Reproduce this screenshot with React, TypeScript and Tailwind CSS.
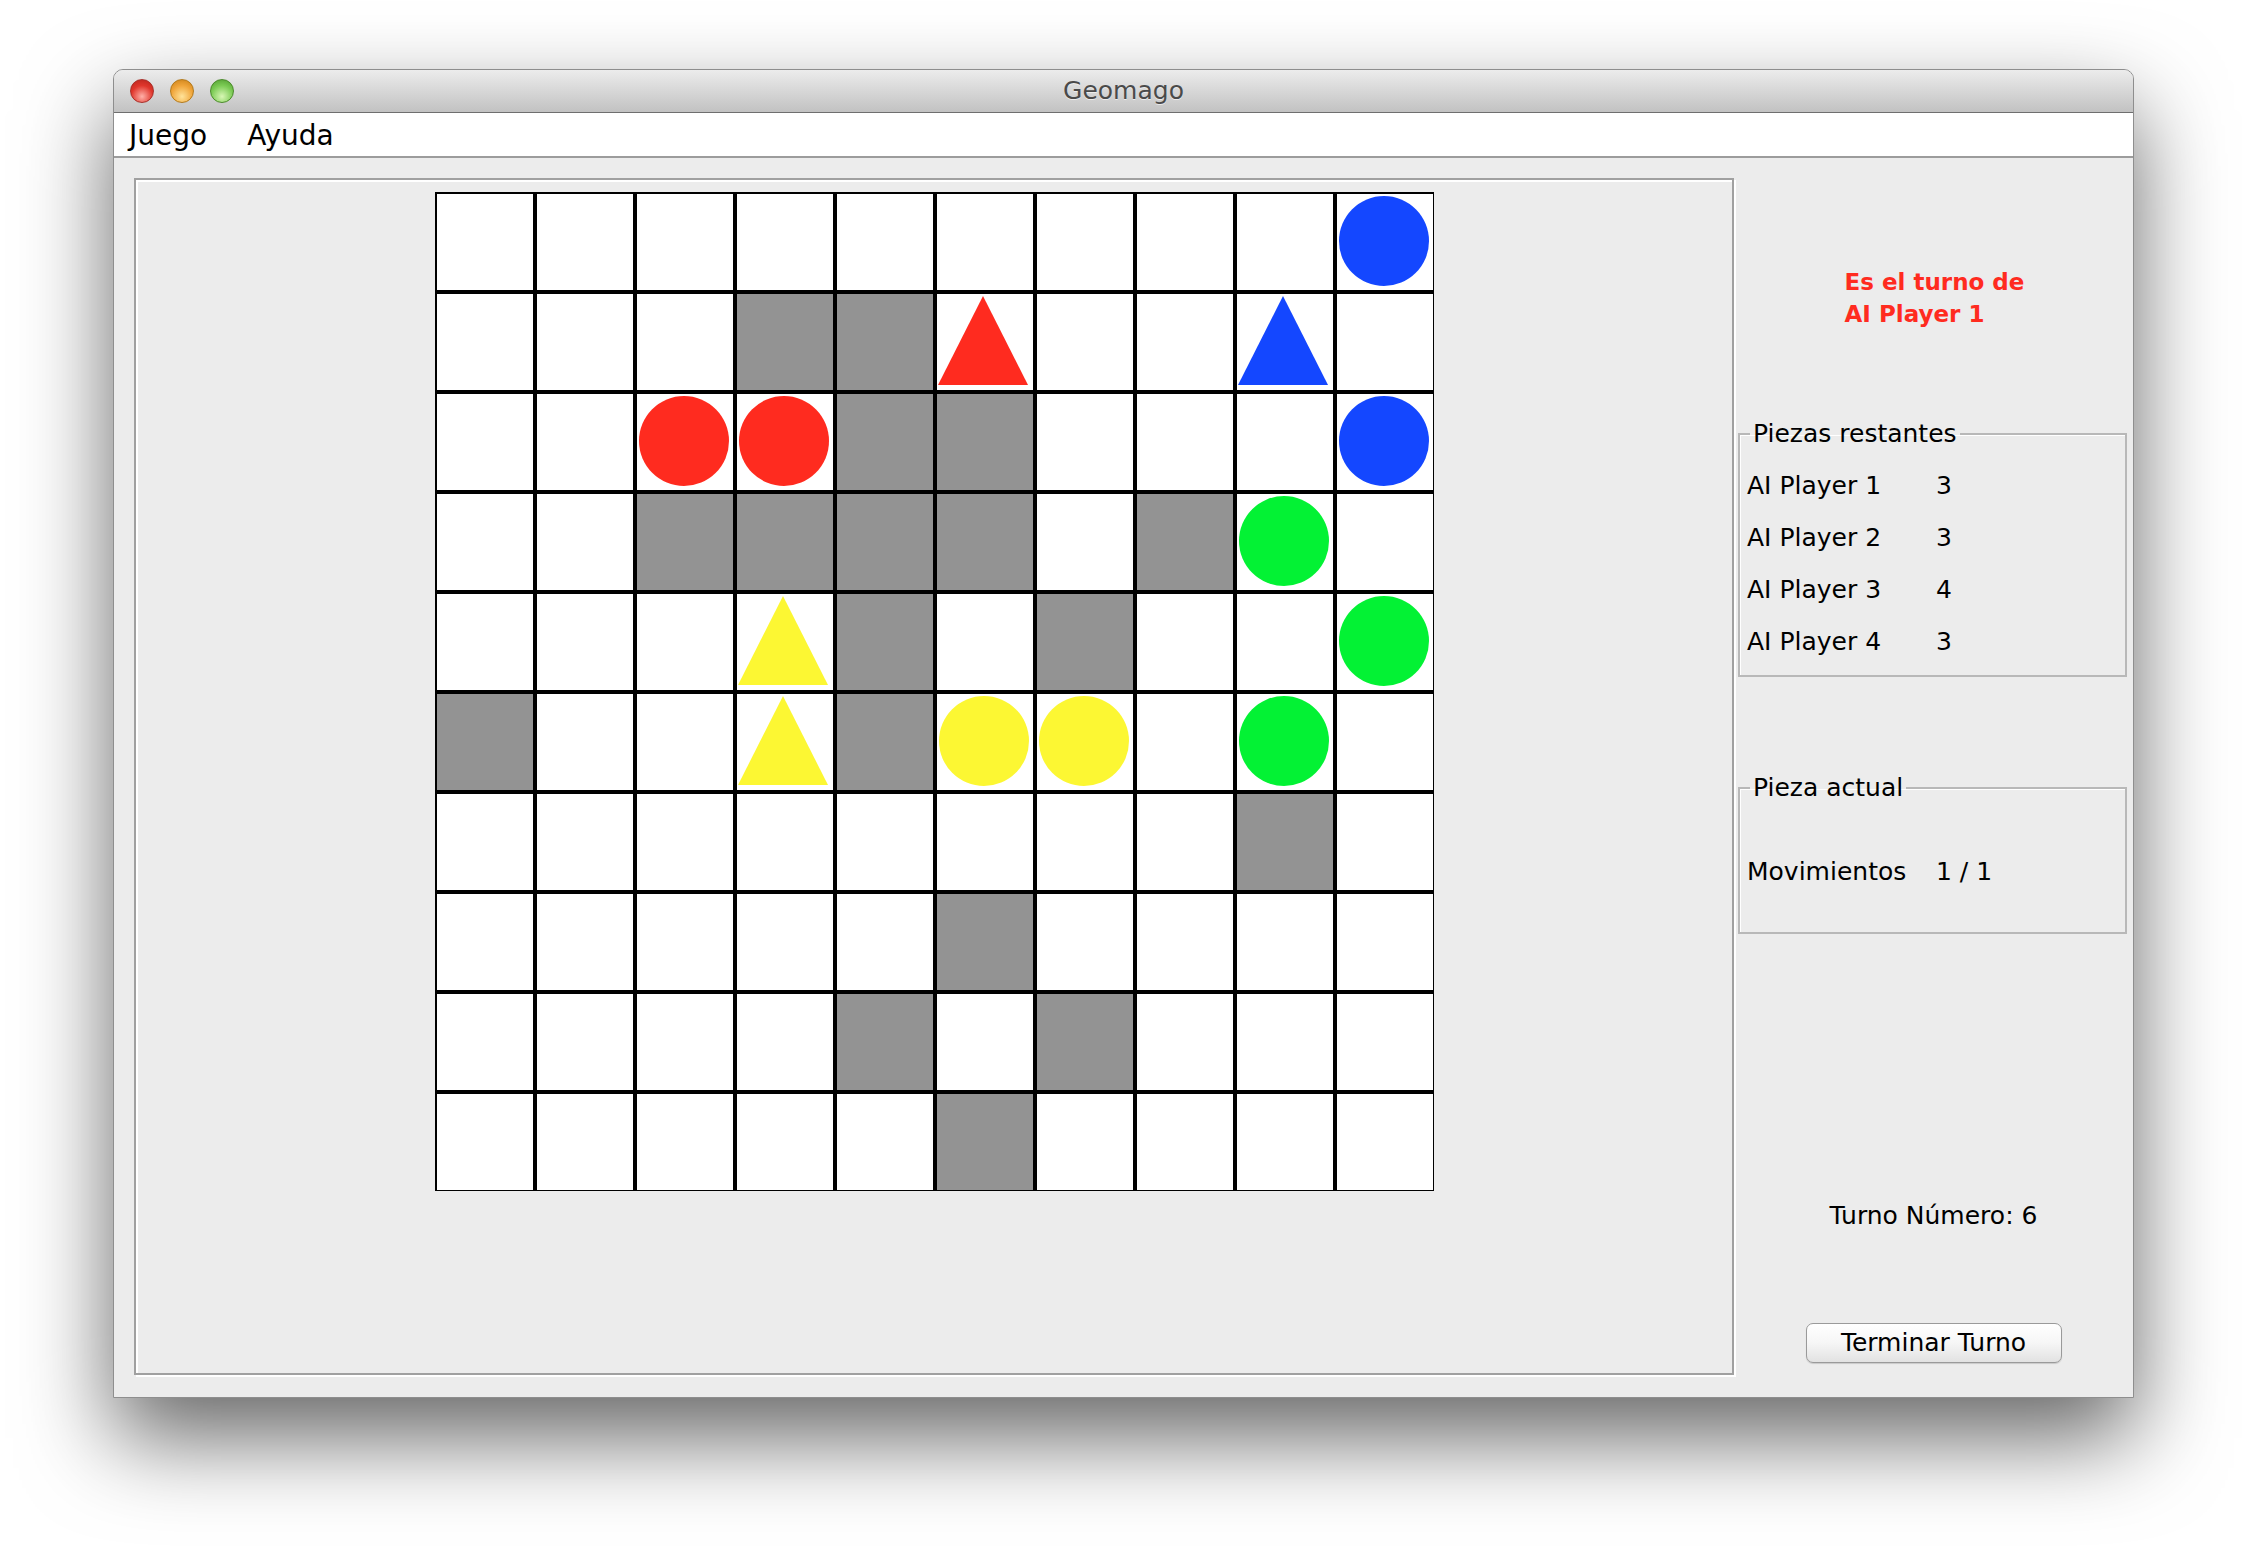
import React from "react";

// '.' empty, '#' wall, upper = circle, lower = triangle
const board = [
  ".........B",
  "...##r..b.",
  "..RR##...B",
  "..####.#G.",
  "...y#.#..G",
  "#..y#YY.G.",
  "........#.",
  ".....#....",
  "....#.#...",
  ".....#....",
];

const colors: Record<string, string> = {
  r: "#ff2b1f",
  b: "#1447ff",
  g: "#03f234",
  y: "#fcf733",
};

const Piece = ({ code }: { code: string }) => {
  const fill = colors[code.toLowerCase()];
  if (code === code.toUpperCase()) {
    return (
      <div
        className="ml-[2px] mt-[2px] h-[90px] w-[90px] rounded-full"
        style={{ backgroundColor: fill }}
      />
    );
  }
  return (
    <svg width="90" height="89" viewBox="0 0 90 89" className="ml-[1px] mt-[2px]">
      <polygon points="45,0 90,89 0,89" fill={fill} />
    </svg>
  );
};

const Cell = ({ code }: { code: string }) => {
  const wall = code === "#";
  return (
    <div
      className={
        wall
          ? "h-[100px] w-[100px] border-2 border-black bg-[#939393]"
          : "flex h-[100px] w-[100px] items-start border-2 border-black bg-white"
      }
    >
      {!wall && code !== "." && <Piece code={code} />}
    </div>
  );
};

const Light = ({ className }: { className: string }) => (
  <div className={`h-[24px] w-[24px] rounded-full border ${className}`} />
);

const Row = ({ label, value }: { label: string; value: string }) => (
  <div className="flex leading-[52px]">
    <span className="w-[189px]">{label}</span>
    <span>{value}</span>
  </div>
);

export default function App() {
  return (
    <div className="h-[1556px] w-[2248px] bg-white pl-[113px] pt-[69px] font-['DejaVu_Sans',sans-serif] text-[25px] text-black">
      <div className="flex h-[1329px] w-[2021px] flex-col overflow-hidden rounded-t-[10px] border border-[#8e8e8e] bg-[#ececec] shadow-[0_40px_90px_rgba(0,0,0,0.6)]">
        {/* title bar */}
        <div className="relative flex h-[43px] items-center border-b border-[#6e6e6e] bg-gradient-to-b from-[#ececec] to-[#c2c2c2]">
          <div className="ml-[16px] flex gap-[16px]">
            <Light className="border-[#a8302a] bg-[radial-gradient(circle_at_50%_75%,#ffb0a8,#e0362c_55%,#b5231b)]" />
            <Light className="border-[#b37a1c] bg-[radial-gradient(circle_at_50%_75%,#ffe39a,#f0a53a_55%,#c87d14)]" />
            <Light className="border-[#4b8a2b] bg-[radial-gradient(circle_at_50%_75%,#d8f7b5,#7ccb55_55%,#4e9a2d)]" />
          </div>
          <div className="absolute inset-0 flex items-center justify-center text-[25px] text-[#4a4a4a] [text-shadow:0_1px_0_rgba(255,255,255,0.6)]">
            Geomago
          </div>
        </div>
        {/* menu bar */}
        <div className="flex h-[45px] items-center gap-[40px] border-b-2 border-[#9c9c9c] bg-white pl-[15px] pt-[2px] text-[28px]">
          <span>Juego</span>
          <span>Ayuda</span>
        </div>
        {/* content */}
        <div className="flex flex-1 pl-[20px]">
          <div className="mt-[20px] h-[1197px] w-[1600px] shrink-0 border-2 border-[#a0a0a0] pt-[12px] shadow-[inset_2px_2px_0_#fff,2px_2px_0_#fff]">
            <div className="flex justify-center">
              <div className="h-[999px] w-[999px] overflow-hidden">
                <div className="grid w-[1000px] grid-cols-10">
                  {board.map((row, r) =>
                    row.split("").map((c, i) => <Cell key={`${r}-${i}`} code={c} />)
                  )}
                </div>
              </div>
            </div>
          </div>
          <div className="flex w-[399px] flex-col">
            <div className="mt-[108px] flex justify-center">
              <div className="pl-[2px] text-[23px] font-bold leading-[32px] text-[#ff2b1f]">
                Es el turno de
                <br />
                AI Player 1
              </div>
            </div>
            <fieldset className="ml-[4px] mt-[89px] w-[389px] border-2 border-[#b8b8b8] pb-[7px] pl-[7px] shadow-[inset_1px_1px_0_#fff]">
              <legend className="ml-[3px] px-[3px] leading-[30px]">Piezas restantes</legend>
              <div className="mt-[11px]">
                <Row label="AI Player 1" value="3" />
                <Row label="AI Player 2" value="3" />
                <Row label="AI Player 3" value="4" />
                <Row label="AI Player 4" value="3" />
              </div>
            </fieldset>
            <fieldset className="ml-[4px] mt-[96px] w-[389px] border-2 border-[#b8b8b8] pb-[34px] pl-[7px] shadow-[inset_1px_1px_0_#fff]">
              <legend className="ml-[3px] px-[3px] leading-[30px]">Pieza actual</legend>
              <div className="mt-[43px]">
                <Row label="Movimientos" value="1 / 1" />
              </div>
            </fieldset>
            <div className="mt-[267px] text-center leading-[30px]">Turno Número: 6</div>
            <div className="mt-[92px] flex justify-center">
              <button className="h-[40px] w-[256px] rounded-[7px] border border-[#9a9a9a] bg-gradient-to-b from-white via-[#f6f6f6] to-[#e2e2e2] leading-[38px] shadow-[0_1px_1px_rgba(0,0,0,0.15)]">
                Terminar Turno
              </button>
            </div>
          </div>
        </div>
      </div>
    </div>
  );
}
